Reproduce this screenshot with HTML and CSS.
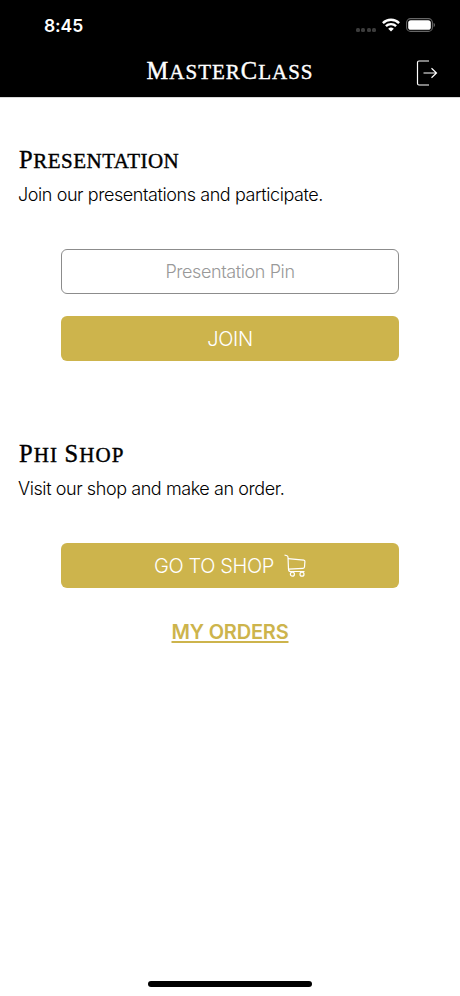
FILE: index.html
```html
<!DOCTYPE html>
<html lang="en">
<head>
    <meta charset="UTF-8">
    <meta name="viewport" content="width=device-width, initial-scale=1.0">
    <title>MasterClass</title>
    <link rel="stylesheet" href="styles.css">
</head>
<body>
    <header class="header">
        <div class="status-bar">
            <span class="time">8:45</span>
            <div class="status-icons">
                <div class="signal"><i></i><i></i><i></i><i></i></div>
                <svg class="wifi" width="18" height="14" viewBox="0 0 18 14" fill="none" stroke="#fff" stroke-width="2.4">
                    <path d="M0.9 5.1a11.5 11.5 0 0 1 16.2 0"/>
                    <path d="M3.9 8.2a7.2 7.2 0 0 1 10.2 0"/>
                    <path d="M6.2 10.8a4 4 0 0 1 5.6 0L9 13.5z" fill="#fff" stroke="none"/>
                </svg>
                <svg class="battery" width="30" height="14" viewBox="0 0 30 14">
                    <rect x="0.6" y="0.6" width="25.8" height="12.8" rx="4" fill="none" stroke="#666" stroke-width="1.1"/>
                    <rect x="2.2" y="2.2" width="22.6" height="9.6" rx="2.6" fill="#fff"/>
                    <path d="M27.7 4.8v4.4c1.6-.7 1.6-3.7 0-4.4z" fill="#777"/>
                </svg>
            </div>
        </div>
        <div class="nav-bar">
            <h1 class="title nav-title"><span class="cap">M</span>aster<span class="cap">C</span>lass</h1>
            <button class="logout" aria-label="Log out">
                <svg width="22" height="26" viewBox="0 0 22 26" fill="none" stroke="#fff" stroke-width="1.2">
                    <path d="M13 1H3Q1.5 1 1.5 2.5V23.5Q1.5 25 3 25H13"/>
                    <path d="M7.5 13H20.2M15.5 8.2L20.5 13L15.5 17.8"/>
                </svg>
            </button>
        </div>
    </header>

    <main>
        <section class="presentation">
            <h2 class="title"><span class="cap">P</span>resentation</h2>
            <p>Join our presentations and participate.</p>
            <div class="form">
                <input class="pin" type="text" placeholder="Presentation Pin">
                <button class="btn">JOIN</button>
            </div>
        </section>

        <section class="shop">
            <h2 class="title shop-title"><span class="cap">P</span>hi <span class="cap">S</span>hop</h2>
            <p>Visit our shop and make an order.</p>
            <div class="form">
                <button class="btn">
                    <span>GO TO SHOP</span>
                    <svg class="cart" width="22" height="23" viewBox="0 0 22 23" fill="none" stroke="#fff" stroke-width="1.2">
                        <path d="M0.5 1L3 1.8Q3.9 2.1 4 3.2L4.5 15.2Q4.6 17.5 6.6 17.5H20.5"/>
                        <path d="M4 4.6L19.8 6.2Q21 6.4 20.9 7.5L20.5 13Q20.4 14.2 19 14.3L4.5 15.2"/>
                        <circle cx="8.4" cy="20.2" r="2"/>
                        <circle cx="18" cy="20.2" r="2"/>
                    </svg>
                </button>
                <a class="orders" href="#">MY ORDERS</a>
            </div>
        </section>
    </main>

    <div class="home-indicator"></div>
</body>
</html>
```

FILE: styles.css
```css
*{
    box-sizing: border-box;
}
body{
    margin: 0;
    min-height: 996px;
    display: flex;
    flex-direction: column;
    background: #fff;
    color: #000;
    font-family: 'Inter', sans-serif;
    font-weight: 300;
}
main{
    flex: 1;
}
button{
    padding: 0;
    border: none;
    cursor: pointer;
    font-family: inherit;
}

.header{
    height: 98px;
    background: #000;
    color: #fff;
    border-bottom: 1px solid #d8d8d8;
}
.status-bar{
    height: 50px;
    padding: 1px 24px 0 44px;
    display: flex;
    align-items: center;
    justify-content: space-between;
}
.time{
    font-size: 17.5px;
    font-weight: 600;
    letter-spacing: -0.1px;
}
.status-icons{
    display: flex;
    align-items: center;
    margin-top: -1px;
}
.signal{
    display: flex;
    gap: 1.5px;
    margin: 9px 6px 0 0;
}
.signal i{
    width: 4px;
    height: 4px;
    border-radius: 1.5px;
    background: #3c3c3c;
}
.battery{
    margin-left: 6px;
}
.nav-bar{
    height: 44px;
    display: grid;
    grid-template-columns: 60px 1fr 60px;
    align-items: center;
}
.title{
    margin: 0;
    font-family: 'Liberation Serif', serif;
    font-size: 21px;
    line-height: 28px;
    font-weight: normal;
    letter-spacing: 0.5px;
    text-transform: uppercase;
    white-space: nowrap;
    -webkit-text-stroke: 0.4px currentColor;
}
.title .cap{
    font-size: 24.5px;
}
.nav-title{
    grid-column: 2;
    text-align: center;
    letter-spacing: 1px;
    padding-bottom: 1px;
}
.shop-title{
    letter-spacing: 1.1px;
}
.logout{
    display: flex;
    justify-content: center;
    background: none;
    padding: 2px 6px 0 0;
}

.presentation{
    padding: 48px 18px 0;
}
.shop{
    padding: 79px 18px 0;
}
section .title{
    height: 28px;
    padding-left: 1px;
}
section p{
    margin: 9px 0 0;
    font-size: 18px;
    line-height: 24px;
    letter-spacing: -0.42px;
    white-space: nowrap;
}
.form{
    margin: 42px 43px 0;
    display: flex;
    flex-direction: column;
    align-items: center;
}
.pin{
    width: 100%;
    height: 45px;
    border: 1px solid #8c8c8c;
    border-radius: 6px;
    background: #fff;
    text-align: center;
    font: 300 18px 'Inter', sans-serif;
    letter-spacing: -0.4px;
    outline: none;
}
.pin::placeholder{
    color: #999;
}
.btn{
    width: 100%;
    height: 45px;
    display: flex;
    align-items: center;
    justify-content: center;
    gap: 10px;
    border-radius: 6px;
    background: #cdb44c;
    color: #fff;
    font-size: 20px;
    font-weight: 300;
    letter-spacing: -0.4px;
}
.pin + .btn{
    margin-top: 22px;
}
.orders{
    margin-top: 32px;
    color: #cdb44c;
    font-size: 20px;
    line-height: 24px;
    font-weight: 600;
    letter-spacing: -0.2px;
    text-underline-offset: 2px;
}

.home-indicator{
    width: 164px;
    height: 6px;
    margin: 0 auto 9px;
    border-radius: 3px;
    background: #000;
}
```
